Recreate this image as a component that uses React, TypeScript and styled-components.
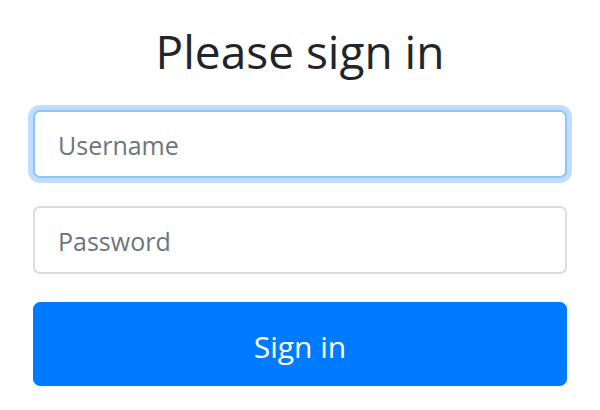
import styled, { createGlobalStyle, css } from "styled-components";

const GlobalStyle = createGlobalStyle`
  html, body {
    margin: 0;
    padding: 0;
    background: #ffffff;
  }
  body {
    font-family: "Open Sans", "Noto Sans", "Liberation Sans", sans-serif;
    color: #212529;
  }
`;

const Page = styled.div`
  box-sizing: border-box;
  width: 600px;
  height: 410px;
  padding: 24px 33px 0;
`;

const Form = styled.form`
  display: flex;
  flex-direction: column;
`;

const Title = styled.h2`
  margin: 0 0 31px;
  font-size: 46px;
  font-weight: 400;
  line-height: 1.2;
  text-align: center;
  color: #212529;
`;

const Field = styled.input<{ $focused?: boolean }>`
  box-sizing: border-box;
  width: 100%;
  height: 68px;
  margin: 0 0 28px;
  padding: 2px 23px 0;
  font-family: inherit;
  font-size: 25px;
  color: #495057;
  background: #ffffff;
  border: 2px solid #dadde1;
  border-radius: 7px;
  outline: none;

  &::placeholder {
    color: #6c757d;
    opacity: 1;
  }

  ${(p) =>
    p.$focused &&
    css`
      border-color: #8fc3fb;
      box-shadow: 0 0 0 5px rgba(0, 123, 255, 0.25);
    `}
`;

const SubmitButton = styled.button`
  box-sizing: border-box;
  width: 100%;
  height: 84px;
  padding: 5px 0 0;
  font-family: inherit;
  font-size: 30px;
  font-weight: 400;
  color: #ffffff;
  background: #007bff;
  border: 1px solid #007bff;
  border-radius: 7px;
  cursor: pointer;
`;

export default function App() {
  return (
    <>
      <GlobalStyle />
      <Page>
        <Form onSubmit={(e) => e.preventDefault()}>
          <Title>Please sign in</Title>
          <Field $focused type="text" name="username" placeholder="Username" />
          <Field type="password" name="password" placeholder="Password" />
          <SubmitButton type="submit">Sign in</SubmitButton>
        </Form>
      </Page>
    </>
  );
}
